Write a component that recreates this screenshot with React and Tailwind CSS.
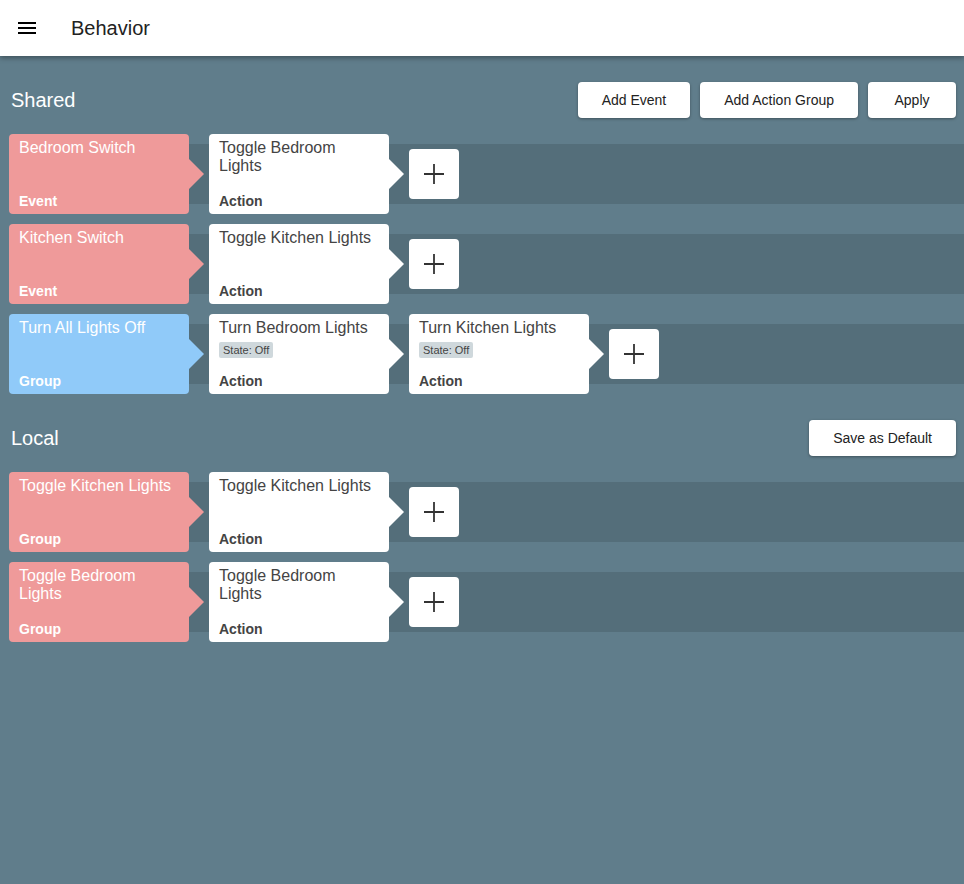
const shared = [
  {
    head: { title: 'Bedroom Switch', kind: 'Event', color: 'red' },
    actions: [{ title: 'Toggle Bedroom Lights' }],
  },
  {
    head: { title: 'Kitchen Switch', kind: 'Event', color: 'red' },
    actions: [{ title: 'Toggle Kitchen Lights' }],
  },
  {
    head: { title: 'Turn All Lights Off', kind: 'Group', color: 'blue' },
    actions: [
      { title: 'Turn Bedroom Lights', state: 'State: Off' },
      { title: 'Turn Kitchen Lights', state: 'State: Off' },
    ],
  },
]

const local = [
  {
    head: { title: 'Toggle Kitchen Lights', kind: 'Group', color: 'red' },
    actions: [{ title: 'Toggle Kitchen Lights' }],
  },
  {
    head: { title: 'Toggle Bedroom Lights', kind: 'Group', color: 'red' },
    actions: [{ title: 'Toggle Bedroom Lights' }],
  },
]

const cardColors = {
  red: { card: 'bg-[#ef9a9a] text-white', arrow: 'border-l-[#ef9a9a]' },
  blue: { card: 'bg-[#90caf9] text-white', arrow: 'border-l-[#90caf9]' },
  white: { card: 'bg-white text-[#444]', arrow: 'border-l-white' },
}

const Card = ({ title, kind, state, color = 'white' }) => {
  const c = cardColors[color]
  return (
    <div className="flex items-center mr-[5px]">
      <div className={`w-[180px] h-[80px] rounded-[4px] flex flex-col justify-between pt-[5px] pb-[5px] px-[10px] ${c.card}`}>
        <div>
          <div className="text-[16px] leading-[18px]">{title}</div>
          {state && (
            <span className="inline-block mt-[2px] bg-[#cfd8dc] text-[#444] text-[11px] leading-[16px] px-[4px] rounded-[2px]">
              {state}
            </span>
          )}
        </div>
        <div className="text-[14px] leading-[16px] font-bold">{kind}</div>
      </div>
      <div className={`w-0 h-0 border-y-[15px] border-y-transparent border-l-[15px] ${c.arrow}`} />
    </div>
  )
}

const AddButton = () => (
  <button className="w-[50px] h-[50px] bg-white rounded-[4px] flex items-center justify-center text-[#333]">
    <svg width="22" height="22" viewBox="0 0 22 22" fill="none" stroke="currentColor" strokeWidth="1.8">
      <path d="M11 1v20M1 11h20" />
    </svg>
  </button>
)

// strip and cards share one grid cell, strip sits underneath
const Row = ({ head, actions }) => (
  <div className="grid ml-[9px] h-[80px]">
    <div className="col-start-1 row-start-1 self-center h-[60px] ml-[10px] bg-[#546e7a]" />
    <div className="col-start-1 row-start-1 flex items-center">
      <Card {...head} />
      {actions.map((a, i) => (
        <Card key={i} title={a.title} state={a.state} kind="Action" />
      ))}
      <AddButton />
    </div>
  </div>
)

const Btn = ({ children }) => (
  <button className="h-[36px] min-w-[88px] px-[24px] bg-white rounded-[4px] shadow-[0_1px_3px_rgba(0,0,0,0.35)] text-[14px] text-[#222]">
    {children}
  </button>
)

const Section = ({ title, buttons, rows }) => (
  <div>
    <div className="flex items-center justify-between pl-[11px] pr-[8px] h-[36px]">
      <h2 className="text-[20px] text-white">{title}</h2>
      <div className="flex gap-[10px]">
        {buttons.map((b) => (
          <Btn key={b}>{b}</Btn>
        ))}
      </div>
    </div>
    <div className="mt-[16px] flex flex-col gap-[10px]">
      {rows.map((r, i) => (
        <Row key={i} {...r} />
      ))}
    </div>
  </div>
)

export default function App() {
  return (
    <div className="min-h-[884px] bg-[#607d8b] font-['Liberation_Sans',Arial,sans-serif]">
      <header className="h-[56px] bg-white flex items-center pl-[15px] shadow-[0_2px_5px_rgba(0,0,0,0.35)] relative">
        <svg width="24" height="24" viewBox="0 0 24 24" fill="#000">
          <path d="M3 18h18v-2H3v2zm0-5h18v-2H3v2zm0-7v2h18V6H3z" />
        </svg>
        <h1 className="ml-[32px] text-[20px] text-[#222]">Behavior</h1>
      </header>
      <main className="pt-[26px]">
        <Section title="Shared" buttons={['Add Event', 'Add Action Group', 'Apply']} rows={shared} />
        <div className="mt-[26px]">
          <Section title="Local" buttons={['Save as Default']} rows={local} />
        </div>
      </main>
    </div>
  )
}
